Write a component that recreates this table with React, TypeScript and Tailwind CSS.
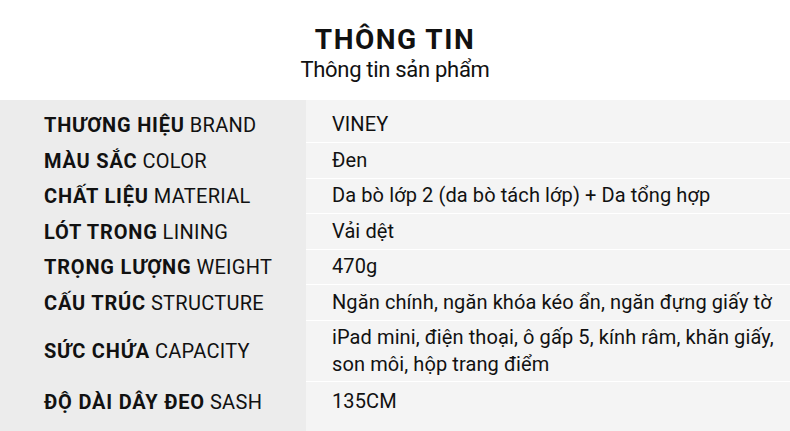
import React from "react";

type Row = { vi: string; en: string; value: React.ReactNode; h: string };

const rows: Row[] = [
  { vi: "THƯƠNG HIỆU", en: "BRAND", value: "VINEY", h: "h-[35.5px]" },
  { vi: "MÀU SẮC", en: "COLOR", value: "Đen", h: "h-[35.5px]" },
  { vi: "CHẤT LIỆU", en: "MATERIAL", value: "Da bò lớp 2 (da bò tách lớp) + Da tổng hợp", h: "h-[35.5px]" },
  { vi: "LÓT TRONG", en: "LINING", value: "Vải dệt", h: "h-[35.5px]" },
  { vi: "TRỌNG LƯỢNG", en: "WEIGHT", value: "470g", h: "h-[35.5px]" },
  { vi: "CẤU TRÚC", en: "STRUCTURE", value: "Ngăn chính, ngăn khóa kéo ẩn, ngăn đựng giấy tờ", h: "h-[35.5px]" },
  {
    vi: "SỨC CHỨA",
    en: "CAPACITY",
    value: (
      <>
        iPad mini, điện thoại, ô gấp 5, kính râm, khăn giấy,
        <br />
        son môi, hộp trang điểm
      </>
    ),
    h: "h-[61px]",
  },
  { vi: "ĐỘ DÀI DÂY ĐEO", en: "SASH", value: "135CM", h: "h-[40px]" },
];

export default function App() {
  return (
    <div className="w-[790px] h-[431px] overflow-hidden bg-white text-[#111]" style={{ fontFamily: "Roboto, 'Noto Sans', sans-serif" }}>
      <div className="h-[100px] flex flex-col items-center pt-[22px]">
        <div className="text-[28px] font-bold leading-[36px] tracking-[1.5px]">THÔNG TIN</div>
        <div className="text-[22px] leading-[28px] -mt-[2px] tracking-[-0.3px]">Thông tin sản phẩm</div>
      </div>
      <div className="h-[331px] grid grid-cols-[306px_1fr]">
        <div className="bg-[#ececec] pt-[7.5px]">
          {rows.map((r, i) => (
            <div key={i} className={`${r.h} flex items-center pl-[44px] text-[20px]`}>
              <span className="font-bold tracking-[0.8px]">{r.vi}</span>
              <span className="ml-[5px] tracking-[0.3px]">{r.en}</span>
            </div>
          ))}
        </div>
        <div className="bg-[#f4f4f4] pt-[7.5px]">
          {rows.map((r, i) => (
            <div
              key={i}
              className={`${r.h} flex items-center pl-[26px] text-[20px] leading-[27px] tracking-[0.1px] ${i < rows.length - 1 ? "border-b border-white" : ""}`}
            >
              <div>{r.value}</div>
            </div>
          ))}
        </div>
      </div>
    </div>
  );
}
